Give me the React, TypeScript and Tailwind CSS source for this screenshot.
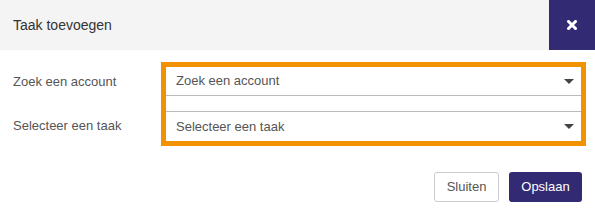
import { useState } from 'react';

const Caret = () => (
    <svg width="10" height="5" viewBox="0 0 10 5" className="shrink-0">
        <path d="M0 0 L10 0 L5 5 Z" fill="#444" />
    </svg>
);

const App = () => {
    const [account] = useState('Zoek een account');
    const [taak] = useState('Selecteer een taak');

    return (
        <div className="w-[595px] h-[216px] bg-white text-[13px] text-[#555] font-['Liberation_Sans',Arial,sans-serif] flex flex-col">
            <div className="h-[50px] bg-[#f4f4f4] flex items-center justify-between">
                <h4 className="pl-[13px] text-[14px] text-[#333]">Taak toevoegen</h4>
                <button className="w-[46px] h-[50px] bg-[#332a74] flex items-center justify-center">
                    <svg width="10" height="10" viewBox="0 0 10 10">
                        <path d="M1.5 1.5 L8.5 8.5 M8.5 1.5 L1.5 8.5" stroke="#fff" strokeWidth="3" strokeLinecap="square" />
                    </svg>
                </button>
            </div>

            <div className="flex pl-[13px] pr-[9px] mt-[12px]">
                <div className="w-[148px] flex flex-col pt-[5px]">
                    <label className="h-[29px] flex items-center">Zoek een account</label>
                    <label className="h-[15px]" />
                    <label className="h-[30px] flex items-center">Selecteer een taak</label>
                </div>
                <div className="flex-1 border-[5px] border-[#f39200] flex flex-col">
                    <div className="h-[29px] border-b border-[#bbb] flex items-center justify-between pl-[10px] pr-[7px]">
                        <span>{account}</span>
                        <Caret />
                    </div>
                    <div className="h-[15px]" />
                    <div className="h-[30px] border-t border-[#bbb] flex items-center justify-between pl-[10px] pr-[7px]">
                        <span>{taak}</span>
                        <Caret />
                    </div>
                </div>
            </div>

            <div className="flex justify-end gap-[10px] pr-[13px] mt-[26px]">
                <button className="h-[30px] w-[65px] border border-[#ccc] rounded-[3px] bg-white text-[#555]">
                    Sluiten
                </button>
                <button className="h-[30px] w-[73px] rounded-[3px] bg-[#332a74] text-white">
                    Opslaan
                </button>
            </div>
        </div>
    );
};

export default App;
